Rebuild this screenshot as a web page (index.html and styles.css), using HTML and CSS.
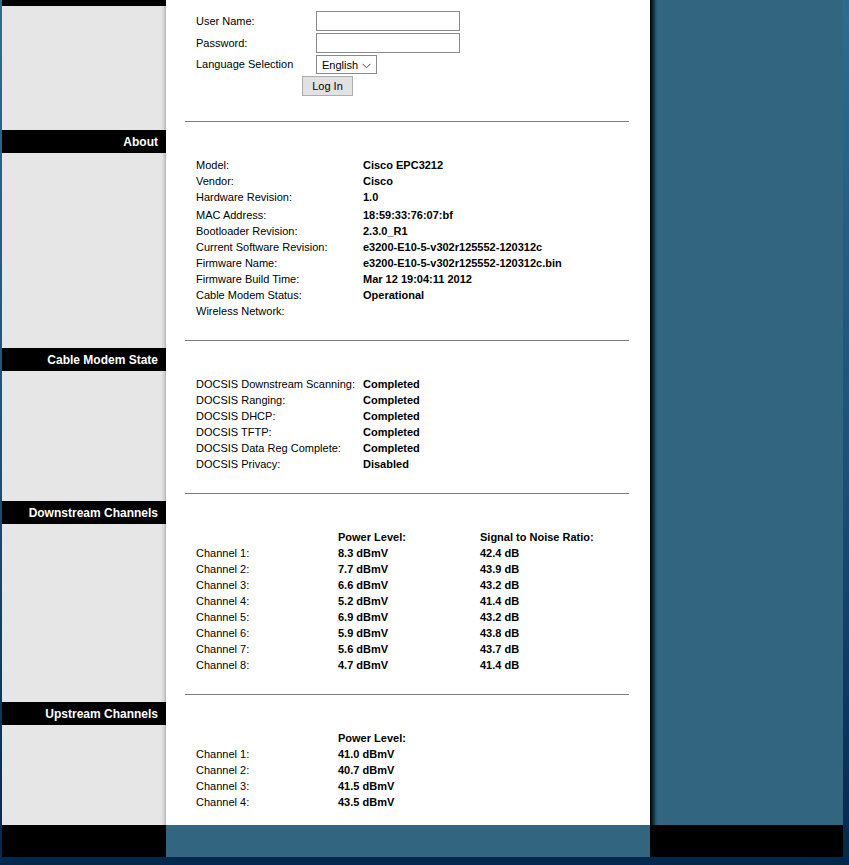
FILE: index.html
```html
<!DOCTYPE html>
<html lang="en">
<head>
  <meta charset="UTF-8" />
  <title>Cisco EPC3212 Status</title>
  <link rel="stylesheet" href="styles.css">
</head>
<body>

<div class="page">

  <!-- Login -->
  <div class="side"><div class="topbar"></div></div>
  <div class="main">
    <form class="login">
      <label for="user">User Name:</label>
      <input id="user" type="text">
      <label for="pass">Password:</label>
      <input id="pass" type="password">
      <label for="lang" class="short">Language Selection</label>
      <span class="select-wrap">
        <select id="lang"><option>English</option></select>
        <svg class="chev" width="9" height="6" viewBox="0 0 9 6"><path d="M0.5 0.8 L4.5 4.8 L8.5 0.8" fill="none" stroke="#444" stroke-width="1"/></svg>
      </span>
      <button type="button" class="btn">Log In</button>
    </form>
    <hr class="first">
  </div>

  <div class="gutter"></div>

  <!-- About -->
  <div class="side"><h2>About</h2></div>
  <div class="main">
    <div class="info pad-about">
      <span>Model:</span><b>Cisco EPC3212</b>
      <span>Vendor:</span><b>Cisco</b>
      <span>Hardware Revision:</span><b>1.0</b>
      <span class="gap">MAC Address:</span><b class="gap">18:59:33:76:07:bf</b>
      <span>Bootloader Revision:</span><b>2.3.0_R1</b>
      <span>Current Software Revision:</span><b>e3200-E10-5-v302r125552-120312c</b>
      <span>Firmware Name:</span><b>e3200-E10-5-v302r125552-120312c.bin</b>
      <span>Firmware Build Time:</span><b>Mar 12 19:04:11 2012</b>
      <span>Cable Modem Status:</span><b>Operational</b>
      <span>Wireless Network:</span><b></b>
    </div>
    <hr>
  </div>

  <!-- Cable Modem State -->
  <div class="side"><h2>Cable Modem State</h2></div>
  <div class="main">
    <div class="info">
      <span>DOCSIS Downstream Scanning:</span><b>Completed</b>
      <span>DOCSIS Ranging:</span><b>Completed</b>
      <span>DOCSIS DHCP:</span><b>Completed</b>
      <span>DOCSIS TFTP:</span><b>Completed</b>
      <span>DOCSIS Data Reg Complete:</span><b>Completed</b>
      <span>DOCSIS Privacy:</span><b>Disabled</b>
    </div>
    <hr>
  </div>

  <!-- Downstream -->
  <div class="side"><h2>Downstream Channels</h2></div>
  <div class="main">
    <div class="channels">
      <span></span><b>Power Level:</b><b>Signal to Noise Ratio:</b>
      <span>Channel 1:</span><b>8.3 dBmV</b><b>42.4 dB</b>
      <span>Channel 2:</span><b>7.7 dBmV</b><b>43.9 dB</b>
      <span>Channel 3:</span><b>6.6 dBmV</b><b>43.2 dB</b>
      <span>Channel 4:</span><b>5.2 dBmV</b><b>41.4 dB</b>
      <span>Channel 5:</span><b>6.9 dBmV</b><b>43.2 dB</b>
      <span>Channel 6:</span><b>5.9 dBmV</b><b>43.8 dB</b>
      <span>Channel 7:</span><b>5.6 dBmV</b><b>43.7 dB</b>
      <span>Channel 8:</span><b>4.7 dBmV</b><b>41.4 dB</b>
    </div>
    <hr>
  </div>

  <!-- Upstream -->
  <div class="side"><h2>Upstream Channels</h2></div>
  <div class="main">
    <div class="channels last">
      <span></span><b>Power Level:</b><b></b>
      <span>Channel 1:</span><b>41.0 dBmV</b><b></b>
      <span>Channel 2:</span><b>40.7 dBmV</b><b></b>
      <span>Channel 3:</span><b>41.5 dBmV</b><b></b>
      <span>Channel 4:</span><b>43.5 dBmV</b><b></b>
    </div>
  </div>

  <!-- Footer -->
  <div class="foot-side"></div>
  <div class="foot-main"></div>
  <div class="foot-right"></div>

</div>

</body>
</html>
```

FILE: styles.css
```css
/* Base */
* {
  box-sizing: border-box;
  margin: 0;
  padding: 0;
}

body {
  font-family: "Liberation Sans", Arial, sans-serif;
  font-size: 11px;
  color: #000;
  min-height: 865px;
  background: linear-gradient(to bottom, #2d6c8f 0%, #1c4f78 55%, #03284d 100%);
}

/* Page grid: side column, content, right gutter */
.page {
  margin-left: 2px;
  width: 841px;
  display: grid;
  grid-template-columns: 164px 484px 193px;
}

.side {
  grid-column: 1;
  background: linear-gradient(to right, #e6e6e6 0, #e6e6e6 159px, #d2d2d2 162px, #b4b4b4 164px);
}

.side .topbar {
  height: 6px;
  background: #000;
}

.side h2 {
  background: #000;
  color: #fff;
  font-size: 12px;
  font-weight: bold;
  height: 23px;
  line-height: 23px;
  padding-top: 1px;
  text-align: right;
  padding-right: 8px;
}

.main {
  grid-column: 2;
  background: #fff;
}

.gutter {
  grid-column: 3;
  grid-row: 1 / span 5;
  background: linear-gradient(to right, #000 0, #0e2a36 3px, #28566d 6px, #32657f 8px);
}

hr {
  border: 0;
  border-top: 1px solid #7d7d7d;
  margin: 21px 21px 7px 19px;
}

hr.first {
  margin-top: 25px;
  margin-bottom: 8px;
}

/* Login form */
.login {
  display: grid;
  grid-template-columns: 120px 144px;
  grid-template-rows: 22px 22px 21px 20px;
  align-items: start;
  padding: 11px 0 0 30px;
}

.login label {
  line-height: 21px;
}

.login label.short {
  line-height: 19px;
}

.login input {
  width: 144px;
  height: 20px;
  border: 1px solid #8a8a8a;
  font: inherit;
}

.select-wrap {
  position: relative;
  display: block;
  width: 61px;
  height: 19px;
}

.select-wrap select {
  appearance: none;
  -webkit-appearance: none;
  display: block;
  width: 61px;
  height: 19px;
  border: 1px solid #8a8a8a;
  border-radius: 0;
  background: #fff;
  font: inherit;
  font-size: 11px;
  padding-left: 5px;
  color: #000;
}

.select-wrap .chev {
  position: absolute;
  right: 6px;
  top: 8px;
  pointer-events: none;
}

.btn {
  grid-column: 1 / span 2;
  margin-left: 106px;
  width: 51px;
  height: 20px;
  background: #e1e1e1;
  border: 1px solid #adadad;
  font: inherit;
  font-size: 11px;
  color: #000;
}

/* Two column info rows */
.info {
  display: grid;
  grid-template-columns: 167px auto;
  line-height: 16px;
  padding: 28px 0 0 30px;
}

.info.pad-about {
  padding-top: 27px;
}

.info .gap {
  margin-top: 2px;
}

/* Channel tables */
.channels {
  display: grid;
  grid-template-columns: 142px 142px auto;
  line-height: 16px;
  padding: 28px 0 0 30px;
}

.channels.last {
  padding-bottom: 15px;
}

/* Footer row */
.foot-side {
  grid-column: 1;
  height: 32px;
  background: #000;
}

.foot-main {
  grid-column: 2;
  background: #32657f;
}

.foot-right {
  grid-column: 3;
  background: #000;
}
```
